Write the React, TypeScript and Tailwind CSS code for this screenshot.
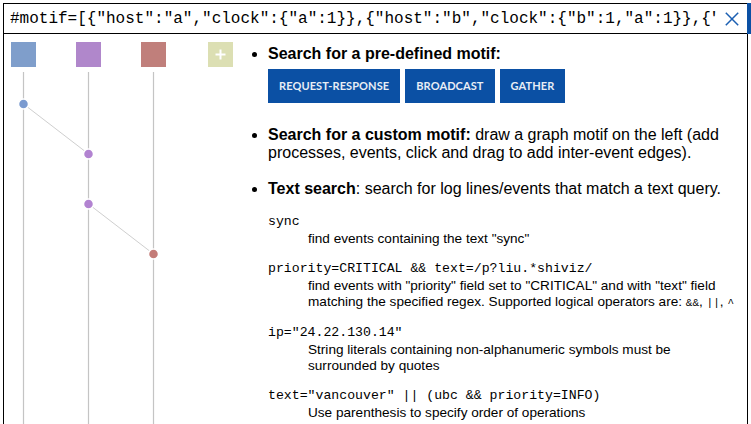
import React from "react";

const query =
  '#motif=[{"host":"a","clock":{"a":1}},{"host":"b","clock":{"b":1,"a":1}},{"host":"b","clock":{"b":2,"a":1}},{"host":"c","clock":{"c":1,"b":2,"a":1}}]';

function Graph() {
  const lines = [19.5, 84.5, 149.5];
  return (
    <svg width="240" height="390" viewBox="0 0 240 390" className="block shrink-0">
      <rect x="7" y="8" width="25" height="25" fill="#7f9ecb" />
      <rect x="72" y="8" width="25" height="25" fill="#b087cb" />
      <rect x="137" y="8" width="25" height="25" fill="#c07f7b" />
      <rect x="204" y="8" width="25" height="25" fill="#dcdfb3" />
      <line x1="216.5" y1="15.5" x2="216.5" y2="25.5" stroke="#ffffff" strokeWidth="2" />
      <line x1="211.5" y1="20.5" x2="221.5" y2="20.5" stroke="#ffffff" strokeWidth="2" />
      {lines.map((x) => (
        <line key={x} x1={x} y1="38" x2={x} y2="390" stroke="#c4c4c4" strokeWidth="1.2" />
      ))}
      <line x1="19.5" y1="70" x2="84.5" y2="120" stroke="#cfcfcf" strokeWidth="1" />
      <line x1="84.5" y1="170" x2="149.5" y2="220" stroke="#cfcfcf" strokeWidth="1" />
      <circle cx="19.5" cy="70" r="5" fill="#7b9bd0" stroke="#ffffff" strokeWidth="1.5" />
      <circle cx="84.5" cy="120" r="5" fill="#b283d1" stroke="#ffffff" strokeWidth="1.5" />
      <circle cx="84.5" cy="170" r="5" fill="#b283d1" stroke="#ffffff" strokeWidth="1.5" />
      <circle cx="149.5" cy="220" r="5" fill="#c47c78" stroke="#ffffff" strokeWidth="1.5" />
    </svg>
  );
}

function Btn({ children }: { children: React.ReactNode }) {
  return (
    <div className="h-[34px] px-[11px] flex items-center bg-[#0b50a4] text-[#e8edf5] font-['Lato',sans-serif] font-bold text-[11px] tracking-[0.1px]">
      {children}
    </div>
  );
}

function Ex({ code, children }: { code: string; children: React.ReactNode }) {
  return (
    <>
      <dt className="font-['Liberation_Mono',monospace] text-[13.2px] leading-[16px] whitespace-pre">{code}</dt>
      <dd className="ml-[40px] mt-[1px] mb-[14px] text-[13.6px] leading-[16px]">{children}</dd>
    </>
  );
}

export default function App() {
  return (
    <div className="w-[751px] h-[424px] overflow-hidden bg-white pt-[3px] pl-[3px] font-['Liberation_Sans',Arial,sans-serif] text-black">
      <div className="flex h-[31px]">
        <div className="flex-1 flex items-center border-t border-b border-l border-black">
          <div className="ml-[6px] w-[706px] overflow-hidden whitespace-nowrap font-['Liberation_Mono',monospace] text-[16px] leading-[20px]">
            {query}
          </div>
          <svg width="14" height="14" viewBox="0 0 14 14" className="ml-[9px] mt-[1px] shrink-0">
            <line x1="0.8" y1="0.8" x2="13.2" y2="13.2" stroke="#1b5fb2" strokeWidth="1.5" />
            <line x1="13.2" y1="0.8" x2="0.8" y2="13.2" stroke="#1b5fb2" strokeWidth="1.5" />
          </svg>
        </div>
        <div className="w-[4px] bg-[#0b50a4]" />
      </div>
      <div className="flex w-[745px] h-[390px] border-l border-r border-black">
        <Graph />
        <div className="flex-1 pt-[11px] pr-[7px]">
          <ul className="list-disc pl-[24px] text-[16px] leading-[18px]">
            <li className="mb-[18px] pb-[5px]">
              <b>Search for a pre-defined motif:</b>
              <div className="flex gap-[5px] mt-[6px]">
                <Btn>REQUEST-RESPONSE</Btn>
                <Btn>BROADCAST</Btn>
                <Btn>GATHER</Btn>
              </div>
            </li>
            <li className="mb-[18px]">
              <b>Search for a custom motif:</b> draw a graph motif on the left (add processes, events, click and drag to add inter-event edges).
            </li>
            <li>
              <b>Text search</b>: search for log lines/events that match a text query.
              <dl className="mt-[16px]">
                <Ex code="sync">find events containing the text "sync"</Ex>
                <Ex code="priority=CRITICAL && text=/p?liu.*shiviz/">
                  find events with "priority" field set to "CRITICAL" and with "text" field matching the specified regex. Supported logical operators are:{" "}
                  <code className="font-['Liberation_Mono',monospace] text-[11px]">&amp;&amp;</code>,{" "}
                  <code className="font-['Liberation_Mono',monospace] text-[11px]">||</code>,{" "}
                  <code className="font-['Liberation_Mono',monospace] text-[11px]">^</code>
                </Ex>
                <Ex code={'ip="24.22.130.14"'}>
                  String literals containing non-alphanumeric symbols must be surrounded by quotes
                </Ex>
                <Ex code={'text="vancouver" || (ubc && priority=INFO)'}>
                  Use parenthesis to specify order of operations
                </Ex>
              </dl>
            </li>
          </ul>
        </div>
      </div>
    </div>
  );
}
